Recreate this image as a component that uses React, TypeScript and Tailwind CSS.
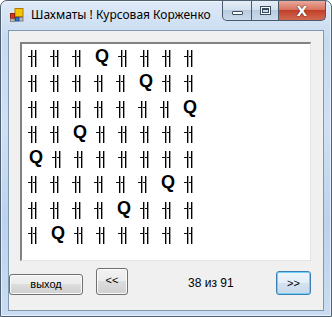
import React from "react";

const rows: string[] = [
  "gggQgggg",
  "gggggQgg",
  "gggggggQ",
  "ggQggggg",
  "Qggggggg",
  "ggggggQg",
  "ggggQggg",
  "gQgggggg",
];

function Glyph() {
  return (
    <span className="relative inline-block w-[9px] h-[17px] mr-[13px] shrink-0">
      <span className="absolute left-0 top-[6px] w-[8px] h-[1px] bg-[#111]" />
      <span className="absolute left-[3px] top-0 w-[1px] h-[17px] bg-black shadow-[1px_0_0_#a0a0a0]" />
      <span className="absolute left-[7px] top-0 w-[1px] h-[17px] bg-black shadow-[1px_0_0_#a0a0a0]" />
    </span>
  );
}

function Queen() {
  return (
    <span className="inline-block w-[14px] ml-[1px] mr-[9px] h-[17px] shrink-0 font-['Liberation_Sans',sans-serif] font-bold text-[18px] leading-[17px] text-black -mt-[2px]">
      Q
    </span>
  );
}

function AppIcon() {
  return (
    <svg width="14" height="14" viewBox="0 0 14 14" className="shrink-0">
      <rect x="5" y="0.5" width="8" height="8" fill="#f5c400" stroke="#b07c00" strokeWidth="1" />
      <rect x="0.5" y="5.5" width="4" height="5" fill="#e03020" stroke="#902010" strokeWidth="1" />
      <rect x="5.5" y="9.5" width="3.5" height="3.5" fill="#3a78d0" stroke="#204a90" strokeWidth="1" />
      <rect x="9.5" y="9.5" width="3.5" height="3.5" fill="#b8b8b8" stroke="#808080" strokeWidth="1" />
      <rect x="0.5" y="11" width="4" height="2.5" fill="#c0c0c0" stroke="#888" strokeWidth="1" />
    </svg>
  );
}

function WinButton({ children, className }: { children: React.ReactNode; className: string }) {
  return (
    <div className={"flex items-center justify-center h-[20px] border border-[#4a5a6c] border-t-0 " + className}>
      {children}
    </div>
  );
}

export default function App() {
  return (
    <div className="w-[332px] h-[317px] bg-white">
      <div className="w-[332px] h-[317px] flex flex-col rounded-t-[7px] border border-[#4f6072] bg-[linear-gradient(180deg,#dfeaf7_0%,#c6daf1_12%,#cfe0f4_40%,#bcd3ee_70%,#c9dcf2_100%)] shadow-[inset_0_0_0_1px_rgba(255,255,255,0.55)] overflow-hidden">
        {/* Title bar */}
        <div className="h-[29px] flex items-start shrink-0">
          <div className="flex items-center pl-[9px] pt-[7px] gap-[7px]">
            <AppIcon />
            <span className="font-['Noto_Sans',sans-serif] text-[12px] leading-[14px] text-black whitespace-nowrap">
              Шахматы ! Курсовая Корженко
            </span>
          </div>
          <div className="ml-auto mr-[5px] flex">
            <WinButton className="w-[30px] rounded-bl-[5px] bg-[linear-gradient(180deg,#e6eef7_0%,#d3e0ee_45%,#b9cbe0_50%,#c9daec_100%)]">
              <span className="block w-[11px] h-[4px] mt-[5px] bg-white border border-[#3d4d60] rounded-[1px]" />
            </WinButton>
            <WinButton className="w-[27px] border-l-0 bg-[linear-gradient(180deg,#e6eef7_0%,#d3e0ee_45%,#b9cbe0_50%,#c9daec_100%)]">
              <span className="block w-[11px] h-[9px] border border-[#3d4d60] bg-white p-[1px]">
                <span className="block w-full h-full border border-[#3d4d60] border-t-2 bg-[#c9d8ea]" />
              </span>
            </WinButton>
            <WinButton className="w-[47px] border-l-0 rounded-br-[5px] bg-[linear-gradient(180deg,#e9a99b_0%,#d9735f_45%,#c0402a_50%,#d26a50_100%)]">
              <span className="font-['DejaVu_Sans',sans-serif] font-bold text-[14px] leading-[14px] text-white [text-shadow:0_0_1px_#3a1010,0_0_1px_#3a1010]">
                X
              </span>
            </WinButton>
          </div>
        </div>
        {/* Client area */}
        <div className="mx-[7px] mb-[5px] flex-1 border border-[#8297b0] bg-[#f0f0f0] flex flex-col">
          <div className="ml-[11px] mt-[11px] w-[291px] h-[219px] border-t-2 border-l-2 border-[#828282] border-r border-b border-r-[#e3e3e3] border-b-[#e3e3e3] bg-white pl-[6px] pt-[6px] flex flex-col">
            {rows.map((r, i) => (
              <div key={i} className="flex items-start h-[25.3px] shrink-0">
                {r.split("").map((c, j) => (c === "Q" ? <Queen key={j} /> : <Glyph key={j} />))}
              </div>
            ))}
          </div>
          <div className="flex items-start mt-[7px] font-['Liberation_Sans',sans-serif] text-black">
            <button className="ml-0 mt-[6px] w-[74px] h-[21px] rounded-[3px] border border-[#707070] bg-[linear-gradient(180deg,#f2f2f2_0%,#ebebeb_49%,#dddddd_50%,#cfcfcf_100%)] shadow-[inset_0_0_0_1px_#fbfbfb] text-[11px] leading-[19px]">
              выход
            </button>
            <button className="ml-[13px] w-[32px] h-[27px] rounded-[3px] border border-[#707070] bg-[linear-gradient(180deg,#f2f2f2_0%,#ebebeb_49%,#dddddd_50%,#cfcfcf_100%)] shadow-[inset_0_0_0_1px_#fbfbfb] text-[11px] leading-[20px] pb-[4px]">
              &lt;&lt;
            </button>
            <span className="ml-[60px] mt-[8px] text-[12px] leading-[14px] whitespace-nowrap">38 из 91</span>
            <button className="ml-auto mr-[12px] mt-[3px] w-[35px] h-[24px] rounded-[3px] border border-[#3c7fb1] bg-[linear-gradient(180deg,#eef5fb_0%,#e3eef8_49%,#d5e3f0_50%,#c8d9ea_100%)] shadow-[inset_0_0_0_1px_#6fd0fb] text-[11px] leading-[22px]">
              &gt;&gt;
            </button>
          </div>
        </div>
      </div>
    </div>
  );
}
